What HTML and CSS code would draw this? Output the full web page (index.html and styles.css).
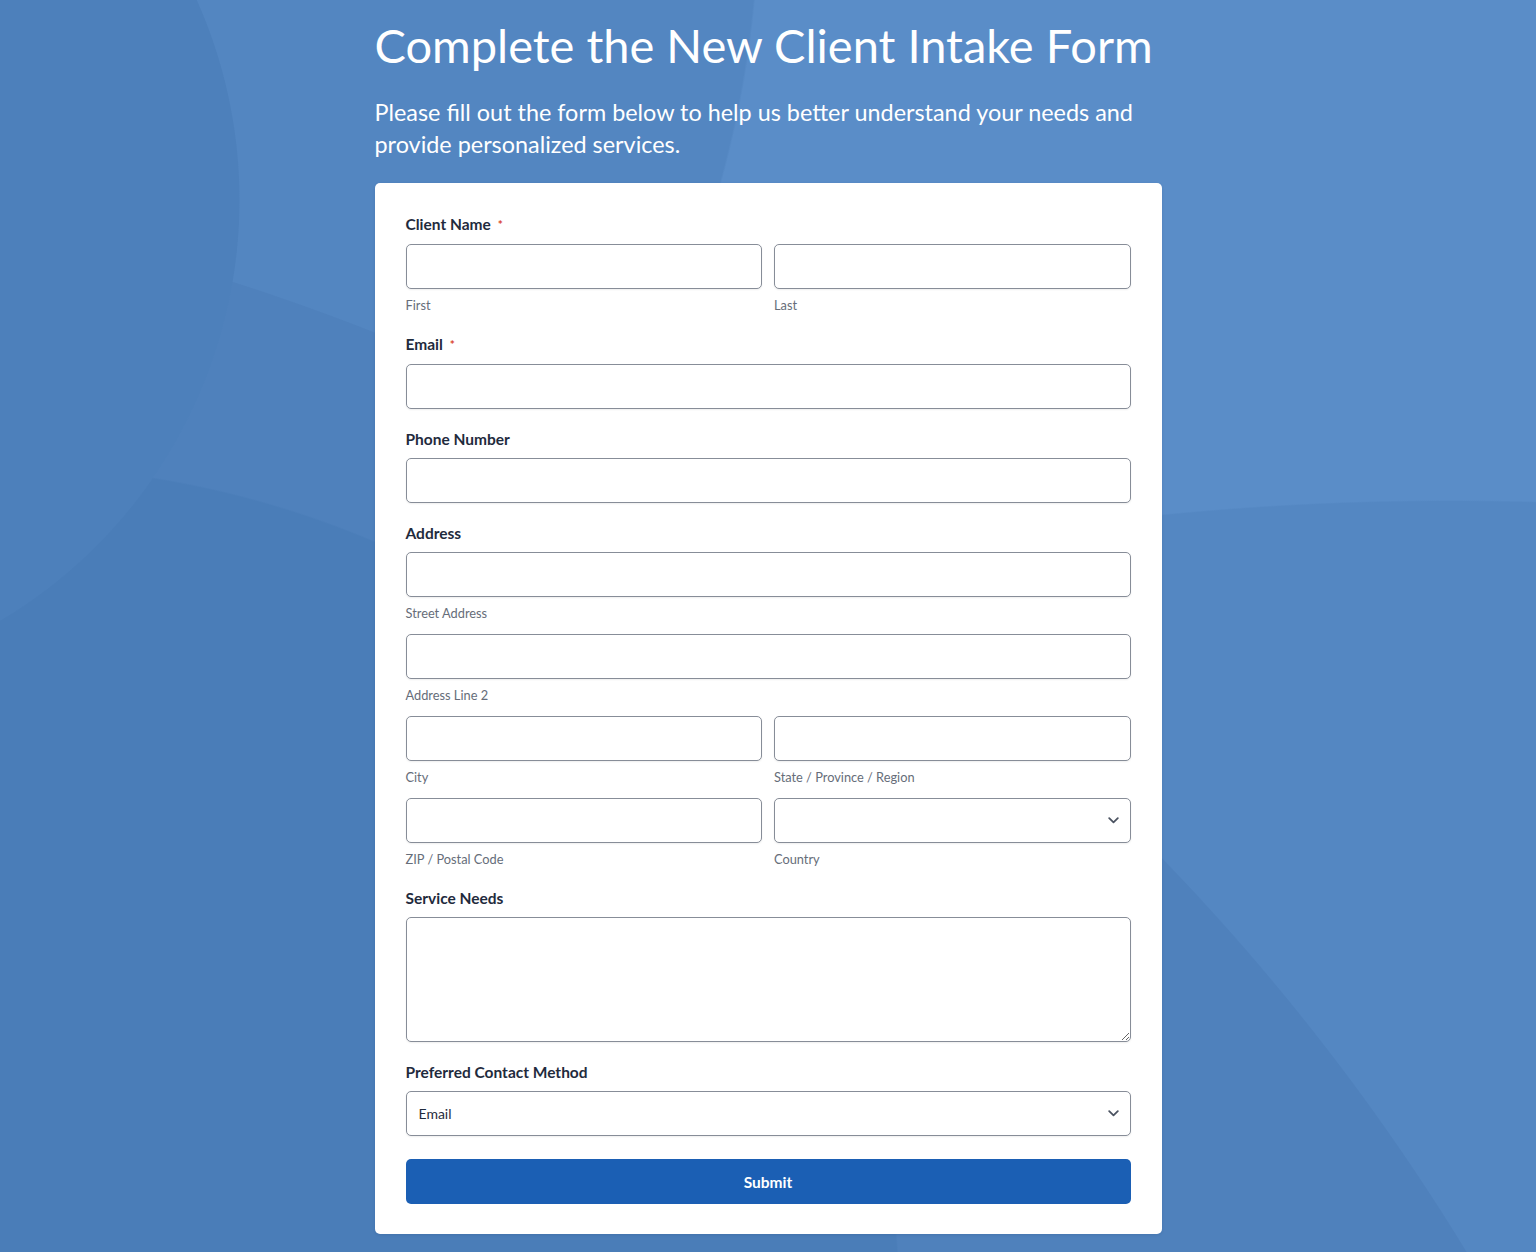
FILE: index.html
```html
<!DOCTYPE html>
<html lang="en">
<head>
<meta charset="utf-8">
<title>New Client Intake Form</title>
<link rel="stylesheet" href="styles.css">
</head>
<body>
<main class="page">
  <header class="intro">
    <h1 class="title">Complete the New Client Intake Form</h1>
    <p class="lead">Please fill out the form below to help us better understand your needs and provide personalized services.</p>
  </header>

  <form class="card">
    <div class="field">
      <div class="label">Client Name <span class="req">*</span></div>
      <div class="row">
        <div class="col">
          <input class="input" type="text">
          <div class="sub">First</div>
        </div>
        <div class="col">
          <input class="input" type="text">
          <div class="sub">Last</div>
        </div>
      </div>
    </div>

    <div class="field">
      <div class="label">Email <span class="req">*</span></div>
      <input class="input" type="email">
    </div>

    <div class="field">
      <div class="label">Phone Number</div>
      <input class="input" type="tel">
    </div>

    <div class="field">
      <div class="label">Address</div>
      <div class="stack">
        <div class="col">
          <input class="input" type="text">
          <div class="sub">Street Address</div>
        </div>
        <div class="col">
          <input class="input" type="text">
          <div class="sub">Address Line 2</div>
        </div>
        <div class="row">
          <div class="col">
            <input class="input" type="text">
            <div class="sub">City</div>
          </div>
          <div class="col">
            <input class="input" type="text">
            <div class="sub">State / Province / Region</div>
          </div>
        </div>
        <div class="row">
          <div class="col">
            <input class="input" type="text">
            <div class="sub">ZIP / Postal Code</div>
          </div>
          <div class="col">
            <div class="select-wrap">
              <select class="input select"><option></option></select>
              <svg class="chev" width="11" height="7" viewBox="0 0 11 7"><polyline points="1.2,1.2 5.5,5.3 9.8,1.2" fill="none" stroke="#4b5361" stroke-width="1.8" stroke-linecap="round" stroke-linejoin="round"/></svg>
            </div>
            <div class="sub">Country</div>
          </div>
        </div>
      </div>
    </div>

    <div class="field">
      <div class="label">Service Needs</div>
      <textarea class="input textarea"></textarea>
    </div>

    <div class="field">
      <div class="label">Preferred Contact Method</div>
      <div class="select-wrap">
        <select class="input select"><option>Email</option></select>
        <svg class="chev" width="11" height="7" viewBox="0 0 11 7"><polyline points="1.2,1.2 5.5,5.3 9.8,1.2" fill="none" stroke="#4b5361" stroke-width="1.8" stroke-linecap="round" stroke-linejoin="round"/></svg>
      </div>
    </div>

    <button class="submit" type="button">Submit</button>
  </form>
</main>
</body>
</html>
```

FILE: styles.css
```css
* { box-sizing: border-box; }

html, body { margin: 0; padding: 0; }

body {
  min-height: 1252px;
  font-family: Lato, "Open Sans", "Liberation Sans", sans-serif;
  background-color: #5a8dc8;
  background-image:
    radial-gradient(circle at -250px 200px, #4d80bb 489px, rgba(77,128,187,0) 490px),
    radial-gradient(ellipse 900px 835px at 0px 1300px, #4a7db8 99.8%, rgba(74,125,184,0) 100%),
    radial-gradient(circle at -450px 2420px, #4f81bc 2244px, rgba(79,129,188,0) 2245px),
    radial-gradient(ellipse 1500px 760px at 1450px 1260px, #5487c2 99.8%, rgba(84,135,194,0) 100%),
    radial-gradient(circle at -300px -100px, #5386c1 1058px, rgba(83,134,193,0) 1060px);
  background-repeat: no-repeat;
  overflow: hidden;
}

.page {
  width: 787px;
  margin: 0 auto;
  padding-top: 17px;
  padding-bottom: 18px;
}

.intro { padding-left: 0; }

.title {
  margin: 0;
  font-size: 47px;
  line-height: 56px;
  font-weight: 400;
  color: #ffffff;
}

.lead {
  margin: 23px 0 0;
  font-size: 23.4px;
  line-height: 32px;
  font-weight: 400;
  color: #ffffff;
}

.card {
  margin-top: 23px;
  background: #ffffff;
  border-radius: 5px;
  padding: 30px 31px 30px;
  display: flex;
  flex-direction: column;
  gap: 19px;
  box-shadow: 0 1px 3px rgba(20, 40, 80, 0.12);
}

.field {
  display: flex;
  flex-direction: column;
  gap: 8px;
}

.label {
  font-size: 15.5px;
  line-height: 22px;
  font-weight: 700;
  color: #1f2b3d;
}

.req {
  color: #d9452b;
  font-size: 12px;
  font-weight: 700;
  margin-left: 3px;
  vertical-align: 1px;
}

.row {
  display: grid;
  grid-template-columns: 1fr 1fr;
  column-gap: 12px;
}

.stack {
  display: flex;
  flex-direction: column;
  gap: 12px;
}

.col {
  display: flex;
  flex-direction: column;
  min-width: 0;
}

.input {
  display: block;
  width: 100%;
  height: 45px;
  margin: 0;
  border: 1px solid #878d98;
  border-radius: 5px;
  background: #ffffff;
  box-shadow: 0 1px 2px rgba(0, 0, 0, 0.07);
  font-family: inherit;
  font-size: 14px;
  color: #1f2b3d;
  padding: 0 12px;
  outline: none;
}

.sub {
  margin-top: 8px;
  font-size: 12.8px;
  line-height: 17px;
  color: #666d79;
}

.select-wrap { position: relative; }

.select {
  appearance: none;
  -webkit-appearance: none;
  padding-right: 36px;
}

.chev {
  position: absolute;
  right: 12px;
  top: 19px;
  pointer-events: none;
}

.textarea {
  height: 125px;
  padding: 10px 12px;
  resize: vertical;
}

.submit {
  margin-top: 4px;
  height: 45px;
  width: 100%;
  border: 0;
  border-radius: 5px;
  background: #1b5fb4;
  color: #ffffff;
  font-family: inherit;
  font-size: 15.5px;
  font-weight: 700;
  cursor: pointer;
}
```
